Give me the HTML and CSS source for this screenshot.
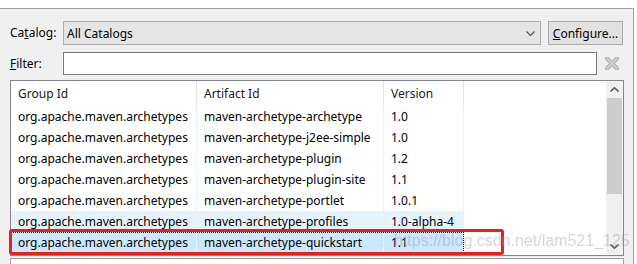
FILE: index.html
```html
<!DOCTYPE html>
<html lang="en">
<head>
  <meta charset="UTF-8" />
  <title>Select an Archetype</title>
  <link rel="stylesheet" href="styles.css">
</head>
<body>
  <div class="screen">
    <div class="panel">
      <div class="line catalog">
        <label class="lbl">Ca<u>t</u>alog:</label>
        <div class="combo">
          <span>All Catalogs</span>
          <svg class="chev" width="9" height="5" viewBox="0 0 9 5"><path d="M0.5 0.5 L4.5 4.5 L8.5 0.5" fill="none" stroke="#555" stroke-width="1.2"/></svg>
        </div>
        <button class="btn"><u>C</u>onfigure...</button>
      </div>

      <div class="line filter">
        <label class="lbl"><u>F</u>ilter:</label>
        <input class="field" type="text" />
        <svg class="clear" width="14" height="13" viewBox="0 0 14 13">
          <path d="M2 1.5 L12 11.5 M12 1.5 L2 11.5" stroke="#a9a9a9" stroke-width="4" stroke-linecap="round"/>
          <path d="M2 1.5 L12 11.5 M12 1.5 L2 11.5" stroke="#cfcfcf" stroke-width="2.4" stroke-linecap="round"/>
        </svg>
      </div>

      <div class="table">
        <div class="grid">
          <div class="head">
            <div class="hc">Group Id</div>
            <div class="hc">Artifact Id</div>
            <div class="hc">Version</div>
            <div class="hc last"></div>
          </div>
          <div class="row"><div>org.apache.maven.archetypes</div><div>maven-archetype-archetype</div><div>1.0</div></div>
          <div class="row"><div>org.apache.maven.archetypes</div><div>maven-archetype-j2ee-simple</div><div>1.0</div></div>
          <div class="row"><div>org.apache.maven.archetypes</div><div>maven-archetype-plugin</div><div>1.2</div></div>
          <div class="row"><div>org.apache.maven.archetypes</div><div>maven-archetype-plugin-site</div><div>1.1</div></div>
          <div class="row"><div>org.apache.maven.archetypes</div><div>maven-archetype-portlet</div><div>1.0.1</div></div>
          <div class="row hover"><div>org.apache.maven.archetypes</div><div>maven-archetype-profiles</div><div>1.0-alpha-4</div></div>
          <div class="row selected"><div>org.apache.maven.archetypes</div><div>maven-archetype-quickstart</div><div>1.1</div></div>
        </div>
        <div class="vscroll">
          <svg class="arrow" width="9" height="5" viewBox="0 0 9 5"><path d="M0.5 4.5 L4.5 0.8 L8.5 4.5" fill="none" stroke="#606060" stroke-width="1.6"/></svg>
          <div class="thumb"></div>
          <div class="track"></div>
          <svg class="arrow" width="9" height="5" viewBox="0 0 9 5"><path d="M0.5 0.5 L4.5 4.2 L8.5 0.5" fill="none" stroke="#606060" stroke-width="1.6"/></svg>
        </div>
      </div>

      <div class="details"></div>
    </div>

    <!-- annotation + watermark lie over the table -->
    <div class="mark"></div>
    <div class="watermark">https://blog.csdn.net/lam521_125</div>
  </div>
</body>
</html>
```

FILE: styles.css
```css
* {margin: 0; padding: 0; box-sizing: border-box;}
html, body {
  height: 264px;
  overflow: hidden;
}
body {
  font-family: 'Noto Sans', 'Liberation Sans', sans-serif;
  font-size: 12px;
  color: #000;
  background: #fff;
}
.screen {
  position: relative;
  width: 637px;
  height: 264px;
  padding-top: 8px;
  overflow: hidden;
}
.panel {
  width: 634px;
  height: 256px;
  background: #f0f0f0;
  border-top: 1px solid #a0a0a0;
  border-right: 1px solid #a0a0a0;
  padding: 12px 0 0 10px;
  overflow: hidden;
}
.line {
  display: flex;
  align-items: center;
}
.catalog {
  height: 24px;
}
.filter {
  height: 23px;
  margin-top: 7px;
}
.lbl {
  width: 53px;
  line-height: 14px;
}
.combo {
  width: 478px;
  height: 24px;
  background: #e5e5e5;
  border: 1px solid #adadad;
  display: flex;
  align-items: center;
  justify-content: space-between;
  padding: 0 5px 0 3px;
}
.combo .chev {
  margin-top: 1px;
}
.btn {
  width: 75px;
  height: 24px;
  margin-left: 7px;
  font: inherit;
  background: #e1e1e1;
  border: 1px solid #adadad;
  color: #000;
}
.field {
  width: 534px;
  height: 23px;
  background: #fff;
  border: 1px solid #7a7a7a;
  outline: none;
}
.clear {
  margin-left: 8px;
}
.table {
  display: flex;
  width: 614px;
  height: 176px;
  margin-top: 5px;
  background: #fff;
  border: 1px solid #828790;
  overflow: hidden;
}
.grid {
  flex: 1;
}
.head {
  display: flex;
  height: 25px;
}
.hc {
  padding-left: 7px;
  line-height: 25px;
  border-right: 1px solid #e5e5e5;
  color: #1a1a1a;
}
.hc:nth-child(1), .row div:nth-child(1) { width: 186px; }
.hc:nth-child(2), .row div:nth-child(2) { width: 187px; }
.hc:nth-child(3), .row div:nth-child(3) { width: 80px; }
.hc.last { flex: 1; border-right: none; }
.row {
  display: flex;
  width: 453px;
  height: 21px;
}
.row div {
  padding-left: 7px;
  line-height: 21px;
  white-space: nowrap;
  border-right: 1px solid #eaf1fa;
}
.row.hover {
  background: #e5f3ff;
}
.row.selected {
  background: #cce8ff;
  outline: 1px dotted #222;
  outline-offset: -1px;
}
.vscroll {
  width: 17px;
  background: #f0f0f0;
  display: flex;
  flex-direction: column;
  align-items: center;
}
.vscroll .arrow {
  margin: 6px 0;
  flex: none;
}
.thumb {
  width: 15px;
  height: 96px;
  background: #cdcdcd;
  flex: none;
}
.track {
  flex: 1;
}
.details {
  width: 614px;
  height: 20px;
  margin-top: 2px;
  background: #fff;
  border: 1px solid #a0a0a0;
}
.mark {
  position: absolute;
  left: 9px;
  top: 229px;
  width: 495px;
  height: 26px;
  border: 3px solid #ea1f1a;
  border-radius: 3px;
}
.watermark {
  position: absolute;
  left: 394px;
  top: 232px;
  font-family: 'Liberation Sans', Arial, sans-serif;
  font-size: 16px;
  color: rgba(150, 150, 150, 0.4);
  white-space: nowrap;
}
```
